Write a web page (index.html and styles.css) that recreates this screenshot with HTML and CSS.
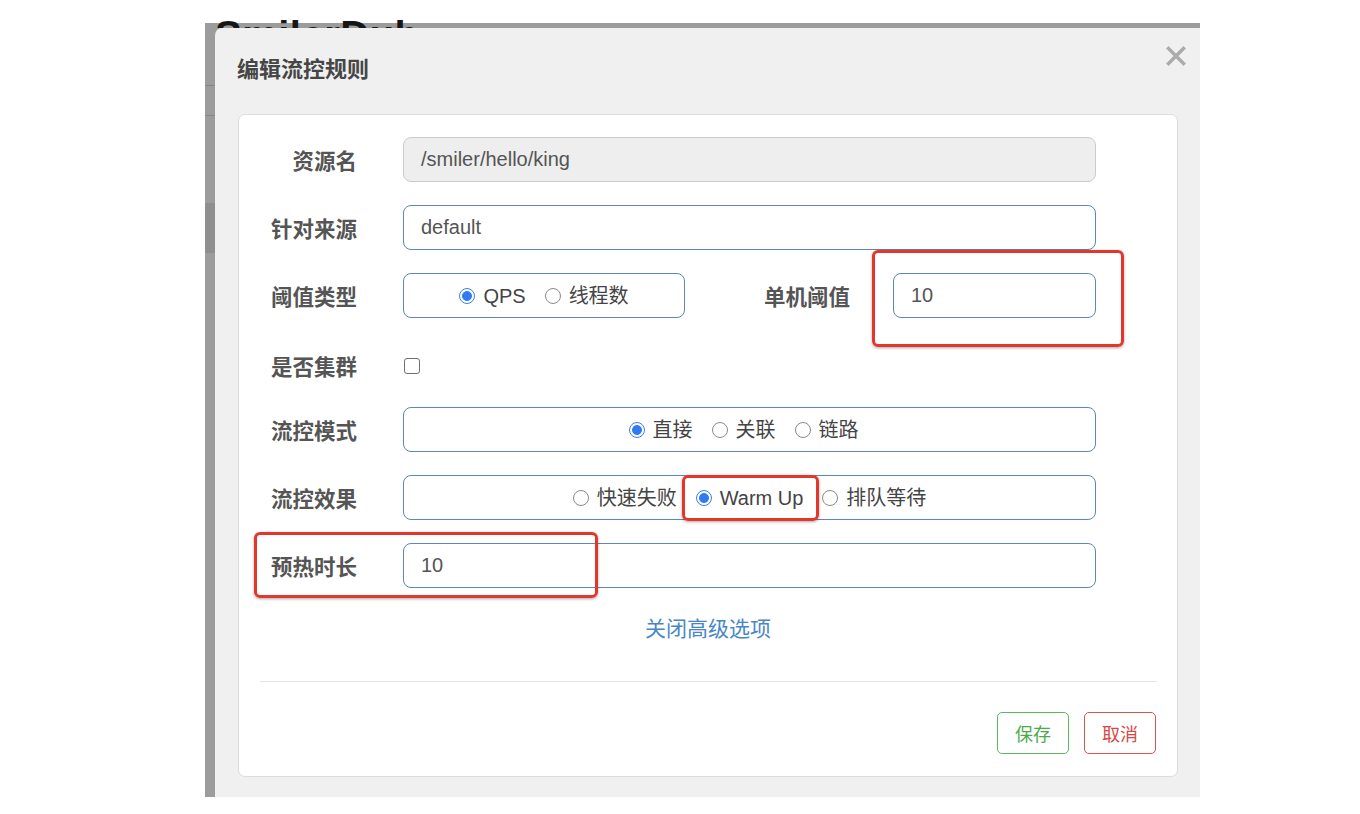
FILE: index.html
```html
<!DOCTYPE html>
<html lang="zh">
<head>
<meta charset="utf-8">
<title>编辑流控规则</title>
<link rel="stylesheet" href="styles.css">
</head>
<body>
<div class="screen">
  <div class="page-bg">
    <div class="brand-clip"><div class="brand">SmilerDub</div></div>
    <div class="side">
      <div class="side-gap1"></div>
      <div class="side-line"></div>
      <div class="side-gap2"></div>
      <div class="side-line"></div>
      <div class="side-gap3"></div>
      <div class="side-block"></div>
    </div>
  </div>

  <div class="modal">
    <div class="modal-header">
      <h4 class="modal-title">编辑流控规则</h4>
      <span class="close">
        <svg width="20" height="20" viewBox="0 0 20 20"><path d="M2.5 2.5 L17.5 17.5 M17.5 2.5 L2.5 17.5" stroke="#ababab" stroke-width="3.4" stroke-linecap="square"/></svg>
      </span>
    </div>

    <div class="panel">
      <div class="form-row">
        <label class="lbl">资源名</label>
        <div class="ctrl input disabled">/smiler/hello/king</div>
      </div>

      <div class="form-row">
        <label class="lbl">针对来源</label>
        <div class="ctrl input">default</div>
      </div>

      <div class="form-row">
        <label class="lbl">阈值类型</label>
        <div class="ctrl radio-box narrow">
          <span class="radio on"></span><span class="rtext">QPS</span>
          <span class="radio"></span><span class="rtext">线程数</span>
        </div>
        <label class="lbl lbl-mid">单机阈值</label>
        <div class="ctrl input grow">10</div>
      </div>

      <div class="form-row check-row">
        <label class="lbl">是否集群</label>
        <span class="checkbox"></span>
      </div>

      <div class="form-row">
        <label class="lbl">流控模式</label>
        <div class="ctrl radio-box shift">
          <span class="radio on"></span><span class="rtext">直接</span>
          <span class="radio"></span><span class="rtext">关联</span>
          <span class="radio"></span><span class="rtext">链路</span>
        </div>
      </div>

      <div class="form-row">
        <label class="lbl">流控效果</label>
        <div class="ctrl radio-box">
          <span class="radio"></span><span class="rtext">快速失败</span>
          <span class="radio on"></span><span class="rtext">Warm Up</span>
          <span class="radio"></span><span class="rtext last">排队等待</span>
        </div>
      </div>

      <div class="form-row">
        <label class="lbl">预热时长</label>
        <div class="ctrl input">10</div>
      </div>

      <div class="link-row"><a class="adv-link">关闭高级选项</a></div>

      <div class="divider"></div>

      <div class="actions">
        <button class="btn btn-save">保存</button>
        <button class="btn btn-cancel">取消</button>
      </div>
    </div>
  </div>

  <div class="mark mark-a"></div>
  <div class="mark mark-b"></div>
  <div class="mark mark-c"></div>
</div>
</body>
</html>
```

FILE: styles.css
```css
html, body {
  margin: 0;
  padding: 0;
  background: #ffffff;
}
body {
  width: 1360px;
  height: 814px;
  overflow: hidden;
  font-family: "Liberation Sans", "Noto Sans CJK SC", sans-serif;
}
.screen {
  position: relative;
  display: flow-root;
  margin-left: 205px;
  margin-top: 23px;
  width: 995px;
  height: 774px;
  background: #9c9c9c;
}
.page-bg {
  height: 100%;
  display: flow-root;
}
.brand-clip {
  margin-top: -3px;
  height: 8px;
  overflow: hidden;
  padding-left: 10px;
}
.brand {
  margin-top: -5px;
  height: 40px;
  font-size: 40px;
  line-height: 40px;
  font-weight: bold;
  color: #161616;
  letter-spacing: 0.5px;
}
.side {
  width: 10px;
}
.side-gap1 { height: 57px; }
.side-gap2 { height: 29px; }
.side-gap3 { height: 87px; }
.side-line { height: 1px; background: #858585; }
.side-block { height: 50px; background: #8f8f8f; }

.modal {
  position: absolute;
  left: 10px;
  top: 5px;
  right: 0;
  bottom: 0;
  background: #f0f0f0;
  border-top-left-radius: 7px;
  display: flex;
  flex-direction: column;
}
.modal-header {
  height: 86px;
  display: flex;
  justify-content: space-between;
  align-items: flex-start;
  padding: 0 14px 0 22px;
  box-sizing: border-box;
}
.modal-title {
  margin: 24px 0 0 0;
  font-family: "Noto Sans CJK SC", sans-serif;
  font-size: 22px;
  line-height: 30px;
  font-weight: bold;
  color: #464646;
}
.close {
  margin-top: 18px;
  width: 20px;
  height: 20px;
  display: block;
}
.close svg { display: block; }

.panel {
  margin: 0 22px 20px 23px;
  flex: 1;
  background: #ffffff;
  border: 1px solid #dcdcdc;
  border-radius: 7px;
  padding: 22px 0 0 0;
  box-sizing: border-box;
  display: flex;
  flex-direction: column;
}
.form-row {
  display: flex;
  align-items: center;
  height: 45px;
  margin-bottom: 23px;
  padding-right: 81px;
}
.check-row {
  height: 43px;
  padding-top: 6px;
  box-sizing: border-box;
}
.lbl {
  width: 118px;
  flex: none;
  text-align: right;
  margin-right: 46px;
  font-family: "Noto Sans CJK SC", sans-serif;
  font-size: 21.5px;
  font-weight: bold;
  color: #555555;
  line-height: 30px;
}
.lbl-mid {
  width: 165px;
  margin-right: 43px;
}
.ctrl {
  height: 45px;
  box-sizing: border-box;
  border: 1px solid #5e87b8;
  border-radius: 8px;
  flex: 1;
}
.input {
  display: flex;
  align-items: center;
  padding-left: 17px;
  font-size: 20px;
  color: #555555;
}
.input.disabled {
  background: #eeeeee;
  border-color: #cccccc;
}
.grow { flex: 1; }
.radio-box {
  display: flex;
  align-items: center;
  justify-content: center;
  font-size: 20px;
  color: #444444;
}
.radio-box.narrow {
  flex: none;
  width: 282px;
}
.radio-box.shift {
  padding-right: 12px;
}
.radio {
  width: 16px;
  height: 16px;
  box-sizing: border-box;
  border-radius: 50%;
  border: 1px solid #8a8a8a;
  background: #ffffff;
  flex: none;
  margin-right: 8px;
}
.radio.on {
  border: 1.5px solid #3d7fe6;
  background: radial-gradient(circle, #2f7bf5 0 4.5px, #ffffff 5.3px);
}
.rtext {
  margin-right: 19px;
  line-height: 28px;
  font-family: "Liberation Sans", "Noto Sans CJK SC", sans-serif;
}
.rtext.last { margin-right: 0; }
.radio-box .rtext:last-child { margin-right: 0; }
.checkbox {
  width: 16px;
  height: 16px;
  box-sizing: border-box;
  border: 1px solid #6f6f6f;
  border-radius: 3px;
  background: #ffffff;
  margin-left: 1px;
}
.link-row {
  text-align: center;
  margin-top: 1px;
  height: 30px;
}
.adv-link {
  font-family: "Noto Sans CJK SC", sans-serif;
  font-size: 21px;
  line-height: 30px;
  color: #4887c6;
  text-decoration: none;
}
.divider {
  margin: 39px 20px 0 21px;
  height: 1px;
  background: #e4e4e4;
}
.actions {
  display: flex;
  justify-content: flex-end;
  gap: 15px;
  padding: 30px 21px 0 0;
}
.btn {
  width: 72px;
  height: 42px;
  background: #ffffff;
  border-radius: 5px;
  font-family: "Noto Sans CJK SC", sans-serif;
  font-size: 18px;
  padding: 0;
  cursor: pointer;
}
.btn-save {
  border: 1px solid #5cb85c;
  color: #4caa4c;
}
.btn-cancel {
  border: 1px solid #d9534f;
  color: #d44a46;
}

.mark {
  position: absolute;
  border: 3px solid #e3372b;
  border-radius: 6px;
  box-shadow: 0 1px 3px rgba(0, 0, 0, 0.35);
  box-sizing: border-box;
}
.mark-a { left: 667px; top: 227px; width: 252px; height: 97px; }
.mark-b { left: 477px; top: 452px; width: 137px; height: 46px; }
.mark-c { left: 49px; top: 509px; width: 344px; height: 66px; }
```
